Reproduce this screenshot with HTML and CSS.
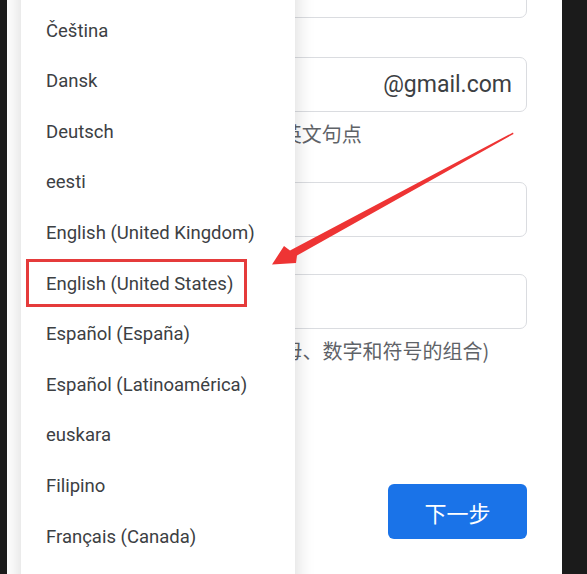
FILE: index.html
```html
<!DOCTYPE html>
<html lang="zh-CN">
<head>
<meta charset="utf-8">
<title>Google 帐号</title>
<link rel="stylesheet" href="styles.css">
</head>
<body>
<div class="page">
  <div class="form">
    <div class="field"></div>
    <div class="field field-email"><span class="suffix">@gmail.com</span></div>
    <div class="hint">可以使用字母、数字和英文句点</div>
    <div class="field field-pw"></div>
    <div class="field"></div>
    <div class="hint hint-pw">使用8个或更多字符(字母、数字和符号的组合)</div>
    <button class="next">下一步</button>
  </div>

  <ul class="menu">
    <li class="item">Català</li>
    <li class="item">Čeština</li>
    <li class="item">Dansk</li>
    <li class="item">Deutsch</li>
    <li class="item">eesti</li>
    <li class="item">English (United Kingdom)</li>
    <li class="item item-marked">English (United States)<span class="mark"></span></li>
    <li class="item">Español (España)</li>
    <li class="item">Español (Latinoamérica)</li>
    <li class="item">euskara</li>
    <li class="item">Filipino</li>
    <li class="item">Français (Canada)</li>
    <li class="item">Français (France)</li>
  </ul>
</div>

<svg class="arrow" width="587" height="574" viewBox="0 0 587 574">
  <polygon points="272,264.5 284,246 290,250.5 513,132.5 513.5,134 297,255.5 296,263" fill="#ee3434"/>
</svg>
</body>
</html>
```

FILE: styles.css
```css
html, body {
  margin: 0;
  padding: 0;
}

body {
  width: 587px;
  height: 574px;
  overflow: hidden;
  background: #1b1b1b;
  position: relative;
  font-family: Roboto, "Noto Sans CJK SC", sans-serif;
}

.page {
  position: relative;
  margin-left: 7px;
  width: 555px;
  height: 574px;
  background: #ffffff;
  overflow: hidden;
}

.form {
  display: flex;
  flex-direction: column;
  padding: 0 35px 0 74.7px;
  margin-top: -37px;
}

.field {
  height: 53px;
  border: 1px solid #dadce0;
  border-radius: 7px;
  display: flex;
  align-items: center;
  justify-content: flex-end;
  padding-right: 14px;
}

.field + .field-email {
  margin-top: 39px;
}

.suffix {
  font-family: Roboto, sans-serif;
  font-size: 23px;
  color: #3c4043;
}

.hint {
  margin-top: 10px;
  height: 24px;
  line-height: 24px;
  font-family: "Noto Sans CJK SC", sans-serif;
  font-size: 20px;
  color: #5f6368;
  white-space: nowrap;
}

.hint-pw {
  text-indent: 3px;
}

.field-pw {
  margin-top: 36px;
}

.field-pw + .field {
  margin-top: 37px;
}

.next {
  align-self: flex-end;
  margin-top: 121px;
  width: 139px;
  height: 55px;
  border: none;
  border-radius: 6px;
  background: #1a73e8;
  color: #ffffff;
  font-family: "Noto Sans CJK SC", sans-serif;
  font-size: 22px;
  padding: 0;
}

.menu {
  position: absolute;
  left: 14px;
  top: -44.9px;
  width: 274px;
  margin: 0;
  padding: 0;
  list-style: none;
  background: #ffffff;
  box-shadow: 0 0 16px 3px rgba(0, 0, 0, 0.13);
}

.item {
  position: relative;
  height: 50.6px;
  line-height: 50.6px;
  padding-left: 25px;
  font-family: Roboto, sans-serif;
  font-size: 18.5px;
  color: #3c4043;
  white-space: nowrap;
}

.mark {
  position: absolute;
  left: 5px;
  top: 0;
  width: 221px;
  height: 48px;
  box-sizing: border-box;
  border: 3px solid #e53b3b;
}

.arrow {
  position: absolute;
  left: 0;
  top: 0;
  pointer-events: none;
}
```
